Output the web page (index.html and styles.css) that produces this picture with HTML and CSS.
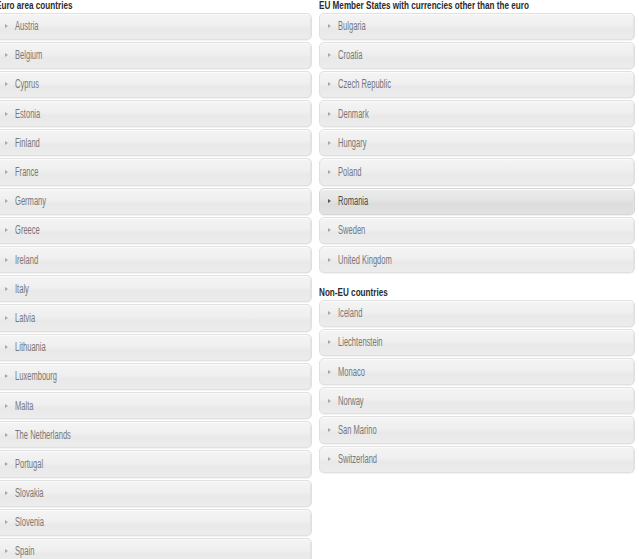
FILE: index.html
```html
<!DOCTYPE html>
<html lang="en">
<head>
<meta charset="utf-8">
<title>Countries</title>
<link rel="stylesheet" href="styles.css">
</head>
<body>
<div class="columns">
  <section class="group">
    <h2 class="group-title"><span>Euro area countries</span></h2>
    <ul class="country-list">
      <li class="country"><i class="caret"></i><span class="name">Austria</span></li>
      <li class="country"><i class="caret"></i><span class="name">Belgium</span></li>
      <li class="country"><i class="caret"></i><span class="name">Cyprus</span></li>
      <li class="country"><i class="caret"></i><span class="name">Estonia</span></li>
      <li class="country"><i class="caret"></i><span class="name">Finland</span></li>
      <li class="country"><i class="caret"></i><span class="name">France</span></li>
      <li class="country"><i class="caret"></i><span class="name">Germany</span></li>
      <li class="country"><i class="caret"></i><span class="name">Greece</span></li>
      <li class="country"><i class="caret"></i><span class="name">Ireland</span></li>
      <li class="country"><i class="caret"></i><span class="name">Italy</span></li>
      <li class="country"><i class="caret"></i><span class="name">Latvia</span></li>
      <li class="country"><i class="caret"></i><span class="name">Lithuania</span></li>
      <li class="country"><i class="caret"></i><span class="name">Luxembourg</span></li>
      <li class="country"><i class="caret"></i><span class="name">Malta</span></li>
      <li class="country"><i class="caret"></i><span class="name">The Netherlands</span></li>
      <li class="country"><i class="caret"></i><span class="name">Portugal</span></li>
      <li class="country"><i class="caret"></i><span class="name">Slovakia</span></li>
      <li class="country"><i class="caret"></i><span class="name">Slovenia</span></li>
      <li class="country"><i class="caret"></i><span class="name">Spain</span></li>
    </ul>
  </section>
  <div class="group-stack">
    <section class="group">
      <h2 class="group-title"><span>EU Member States with currencies other than the euro</span></h2>
      <ul class="country-list">
        <li class="country"><i class="caret"></i><span class="name">Bulgaria</span></li>
        <li class="country"><i class="caret"></i><span class="name">Croatia</span></li>
        <li class="country"><i class="caret"></i><span class="name">Czech Republic</span></li>
        <li class="country"><i class="caret"></i><span class="name">Denmark</span></li>
        <li class="country"><i class="caret"></i><span class="name">Hungary</span></li>
        <li class="country"><i class="caret"></i><span class="name">Poland</span></li>
        <li class="country is-hover"><i class="caret"></i><span class="name">Romania</span></li>
        <li class="country"><i class="caret"></i><span class="name">Sweden</span></li>
        <li class="country"><i class="caret"></i><span class="name">United Kingdom</span></li>
      </ul>
    </section>
    <section class="group group-next">
      <h2 class="group-title"><span>Non-EU countries</span></h2>
      <ul class="country-list">
        <li class="country"><i class="caret"></i><span class="name">Iceland</span></li>
        <li class="country"><i class="caret"></i><span class="name">Liechtenstein</span></li>
        <li class="country"><i class="caret"></i><span class="name">Monaco</span></li>
        <li class="country"><i class="caret"></i><span class="name">Norway</span></li>
        <li class="country"><i class="caret"></i><span class="name">San Marino</span></li>
        <li class="country"><i class="caret"></i><span class="name">Switzerland</span></li>
      </ul>
    </section>
  </div>
</div>
</body>
</html>
```
FILE: styles.css
```css
html, body {
  margin: 0;
  padding: 0;
  background: #ffffff;
  overflow: hidden;
}

body {
  font-family: "Liberation Sans", Arial, sans-serif;
}

.columns {
  display: grid;
  grid-template-columns: 316px 316px;
  column-gap: 7px;
  margin-left: -4px;
  align-items: start;
}

.group-title {
  margin: 0 0 2.5px;
  height: 10px;
  font-size: 11px;
  line-height: 10px;
  font-weight: bold;
  color: #2b2b2b;
  white-space: nowrap;
}

.group-title span {
  display: inline-block;
  transform: scaleX(0.74);
  transform-origin: left center;
}

.group-next {
  margin-top: 14px;
}

.country-list {
  list-style: none;
  margin: 0;
  padding: 0;
}

.country {
  box-sizing: border-box;
  height: 27.2px;
  margin-bottom: 2px;
  display: flex;
  align-items: center;
  padding-left: 8px;
  border: 1px solid #e0e0e0;
  border-radius: 5px;
  background: linear-gradient(#f4f4f4 0%, #efefef 45%, #e9e9e9 60%, #ececec 100%);
  box-shadow: inset 0 1px 0 #fbfbfb, inset -1px 0 0 #e4e4e4, 0 1px 0 #f2f2f2;
  color: #777777;
  font-size: 12px;
  white-space: nowrap;
}

.caret {
  width: 0;
  height: 0;
  border-left: 3px solid #a8a8a8;
  border-top: 2.5px solid transparent;
  border-bottom: 2.5px solid transparent;
  margin-right: 7px;
  flex: none;
}

.name {
  display: inline-block;
  transform: scaleX(0.63);
  transform-origin: left center;
}

.country.is-hover {
  background: linear-gradient(#ececec 0%, #e4e4e4 45%, #dcdcdc 60%, #e2e2e2 100%);
  border-color: #d6d6d6;
  color: #4a4a4a;
}

.country.is-hover .caret {
  border-left-color: #555555;
}
```
